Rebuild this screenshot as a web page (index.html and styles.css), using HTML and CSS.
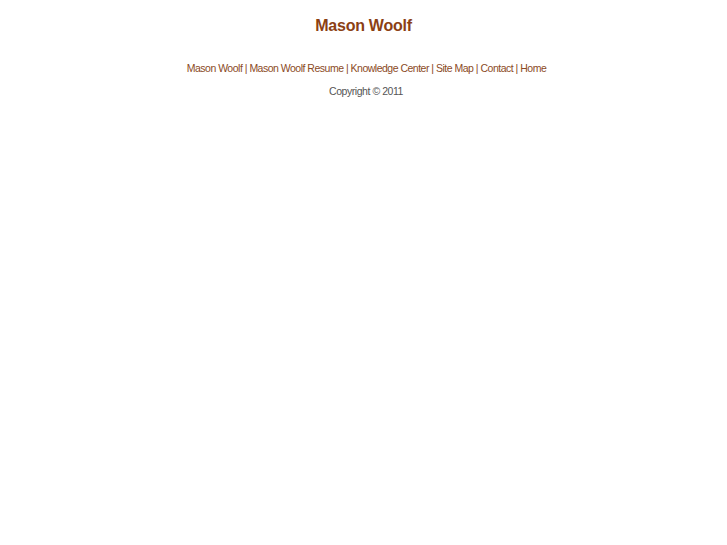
FILE: index.html
```html
<!DOCTYPE html>
<html>
<head>
<meta charset="utf-8">
<title>Mason Woolf</title>
<link rel="stylesheet" href="styles.css">
</head>
<body>
<div class="page">
  <h1 class="title">Mason Woolf</h1>
  <p class="nav"><a href="#">Mason Woolf</a> | <a href="#">Mason Woolf Resume</a> | <a href="#">Knowledge Center</a> | <a href="#">Site Map</a> | <a href="#">Contact</a> | <a href="#">Home</a></p>
  <p class="copy">Copyright © 2011</p>
</div>
</body>
</html>
```
FILE: styles.css
```css
body {
  margin: 0;
  background: #fff;
  font-family: "Liberation Sans", Arial, sans-serif;
}
.page {
  text-align: center;
  padding-top: 16px;
}
.title {
  margin: 0;
  font-size: 16px;
  font-weight: bold;
  color: #8b4013;
  line-height: 20px;
  letter-spacing: -0.25px;
}
.nav {
  margin: 25px 0 0;
  padding-left: 6px;
  font-size: 10.5px;
  line-height: 14px;
  color: #8b4a25;
  letter-spacing: -0.5px;
}
.nav a {
  color: #8b4a25;
  text-decoration: none;
}
.copy {
  margin: 9px 0 0;
  padding-left: 5px;
  font-size: 10.5px;
  line-height: 14px;
  color: #555555;
  letter-spacing: -0.45px;
}
```
